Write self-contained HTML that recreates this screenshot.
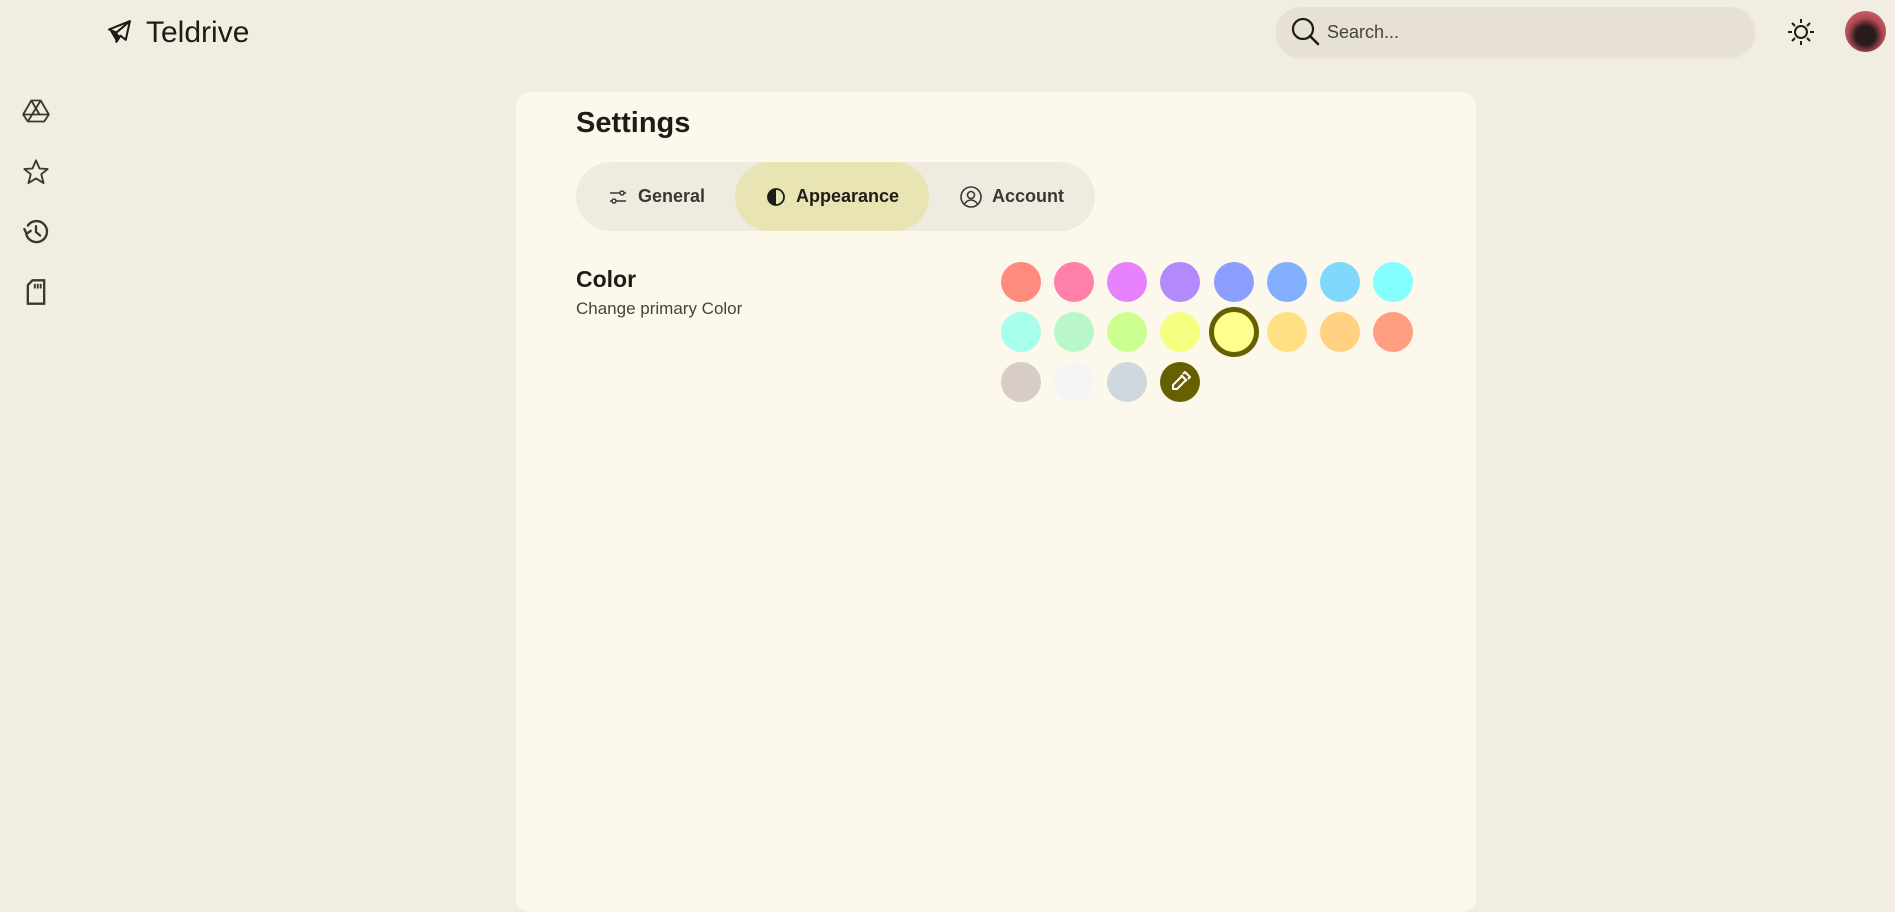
<!DOCTYPE html>
<html><head><meta charset="utf-8"><style>
*{box-sizing:border-box;margin:0;padding:0}
body{width:1895px;height:893px;overflow:hidden;background:#f1ede1;font-family:"Liberation Sans",sans-serif;color:#1d1c16;position:relative}
.abs{position:absolute}
.search{left:1276px;top:7px;width:479px;height:50px;border-radius:25px;background:#e6e1d4;box-shadow:0 1px 2px rgba(0,0,0,.06)}
.card{left:516px;top:92px;width:960px;height:820px;border-radius:14px;background:#fcf8ec}
.tabs{left:576px;top:162px;width:519px;height:69px;border-radius:35px;background:#efebe0}
.pill{left:735px;top:162px;width:194px;height:69px;border-radius:35px;background:#e8e4b4}
.tab{top:186px;font-size:18px;font-weight:bold;color:#3a392f}
.c{position:absolute;width:40px;height:40px;border-radius:50%}
</style></head><body>
<svg class="abs" style="left:106px;top:19px" width="27" height="25" viewBox="0 0 24 24"><path d="M22 2L2 10l7 3 0 9 4-6 5 4z" fill="none" stroke="#1d1c16" stroke-width="2" stroke-linejoin="round"/><path d="M2 10l7 3 4 4-4 5z" fill="#1d1c16"/><path d="M9 13L22 2" stroke="#1d1c16" stroke-width="2"/></svg>
<div class="abs" style="left:146px;top:16px;font-size:30px">Teldrive</div>
<div class="abs search"></div>
<svg class="abs" style="left:1290px;top:16px" width="32" height="32" viewBox="0 0 32 32"><circle cx="13" cy="13" r="10" fill="none" stroke="#1d1c16" stroke-width="2.2"/><path d="M20 20l8 8" stroke="#1d1c16" stroke-width="2.6" stroke-linecap="round"/></svg>
<div class="abs" style="left:1327px;top:22px;font-size:18px;color:#45443a">Search...</div>
<svg class="abs" style="left:1786px;top:17px" width="30" height="30" viewBox="0 0 30 30" stroke="#1d1c16" stroke-width="2" fill="none"><circle cx="15" cy="15" r="6"/><path d="M15 2v4M15 24v4M2 15h4M24 15h4M6 6l3 3M21 21l3 3M6 24l3-3M21 9l3-3"/></svg>
<div class="abs" style="left:1845px;top:11px;width:41px;height:41px;border-radius:50%;background:radial-gradient(circle at 50% 60%,#2a1c1e 0 30%,#b04a55 55%,#d9707a 100%)"></div>
<svg class="abs" style="left:22px;top:97px" width="28" height="28" viewBox="0 0 24 24" fill="none" stroke="#3a392f" stroke-width="1.6" stroke-linejoin="round"><path d="M8 3h8l7 12-4 6H5l-4-6z"/><path d="M8 3l7 12H1M16 3L5 21M15 15h8"/></svg>
<svg class="abs" style="left:22px;top:158px" width="28" height="28" viewBox="0 0 24 24" fill="none" stroke="#3a392f" stroke-width="1.6" stroke-linejoin="round"><path d="M12 2l3 7 7 .5-5.5 4.5 2 7.5L12 17.5 5.5 21.5l2-7.5L2 9.5 9 9z"/></svg>
<svg class="abs" style="left:22px;top:218px" width="28" height="28" viewBox="0 0 24 24" fill="none" stroke="#3a392f" stroke-width="2" stroke-linecap="round"><path d="M3.5 13A9 9 0 1 0 5 6.5"/><path d="M2 9.5l2 4 3.5-2.5"/><path d="M12 7v5l3.5 3"/></svg>
<svg class="abs" style="left:22px;top:278px" width="28" height="28" viewBox="0 0 24 24" fill="none" stroke="#3a392f" stroke-width="2"><path d="M9 2h10v20H5V6z"/><path d="M11 5v4M13.5 5v4M16 5v4" stroke-width="1.6"/></svg>
<div class="abs card"></div>
<div class="abs" style="left:576px;top:107px;font-size:29px;font-weight:bold">Settings</div>
<div class="abs tabs"></div>
<div class="abs pill"></div>
<svg class="abs" style="left:608px;top:187px" width="20" height="20" viewBox="0 0 20 20" fill="none" stroke="#3a392f" stroke-width="1.5"><path d="M2 6h10M16 6h2M2 14h2M8 14h10"/><circle cx="14" cy="6" r="2"/><circle cx="6" cy="14" r="2"/></svg>
<div class="abs tab" style="left:638px">General</div>
<svg class="abs" style="left:766px;top:187px" width="20" height="20" viewBox="0 0 20 20"><circle cx="10" cy="10" r="8" fill="none" stroke="#1d1c16" stroke-width="1.8"/><path d="M10 2a8 8 0 0 0 0 16z" fill="#1d1c16"/></svg>
<div class="abs tab" style="left:796px;color:#1d1c16">Appearance</div>
<svg class="abs" style="left:959px;top:185px" width="24" height="24" viewBox="0 0 24 24" fill="none" stroke="#3a392f" stroke-width="1.6"><circle cx="12" cy="12" r="10"/><circle cx="12" cy="10" r="3.5"/><path d="M5.5 19c2-3 4-4 6.5-4s4.5 1 6.5 4"/></svg>
<div class="abs tab" style="left:992px">Account</div>
<div class="abs" style="left:576px;top:266px;font-size:23px;font-weight:bold">Color</div>
<div class="abs" style="left:576px;top:299px;font-size:17px;color:#45443a">Change primary Color</div>
<div class="c" style="left:1001px;top:262px;background:#ff8b7c"></div>
<div class="c" style="left:1054px;top:262px;background:#ff80a9"></div>
<div class="c" style="left:1107px;top:262px;background:#e882fc"></div>
<div class="c" style="left:1160px;top:262px;background:#b38afc"></div>
<div class="c" style="left:1214px;top:262px;background:#8c9eff"></div>
<div class="c" style="left:1267px;top:262px;background:#82b0ff"></div>
<div class="c" style="left:1320px;top:262px;background:#80d8ff"></div>
<div class="c" style="left:1373px;top:262px;background:#84ffff"></div>
<div class="c" style="left:1001px;top:312px;background:#a7ffeb"></div>
<div class="c" style="left:1054px;top:312px;background:#b9f6ca"></div>
<div class="c" style="left:1107px;top:312px;background:#ccff90"></div>
<div class="c" style="left:1160px;top:312px;background:#f4ff81"></div>
<div class="c" style="left:1209px;top:307px;width:50px;height:50px;background:#ffff8d;border:5px solid #666000"></div>
<div class="c" style="left:1267px;top:312px;background:#ffe082"></div>
<div class="c" style="left:1320px;top:312px;background:#ffd180"></div>
<div class="c" style="left:1373px;top:312px;background:#ff9e80"></div>
<div class="c" style="left:1001px;top:362px;background:#d7ccc8"></div>
<div class="c" style="left:1054px;top:362px;background:#f5f5f5"></div>
<div class="c" style="left:1107px;top:362px;background:#cfd8dc"></div>
<div class="c" style="left:1160px;top:362px;background:#666000"></div>
<svg class="abs" style="left:1168px;top:370px" width="24" height="24" viewBox="0 0 24 24" fill="none" stroke="#fff" stroke-width="2" stroke-linejoin="round"><path d="M14 6l4 4-9 9H5v-4z"/><path d="M13 5l6 6M15 4l2-2 5 5-2 2"/></svg>
</body></html>
